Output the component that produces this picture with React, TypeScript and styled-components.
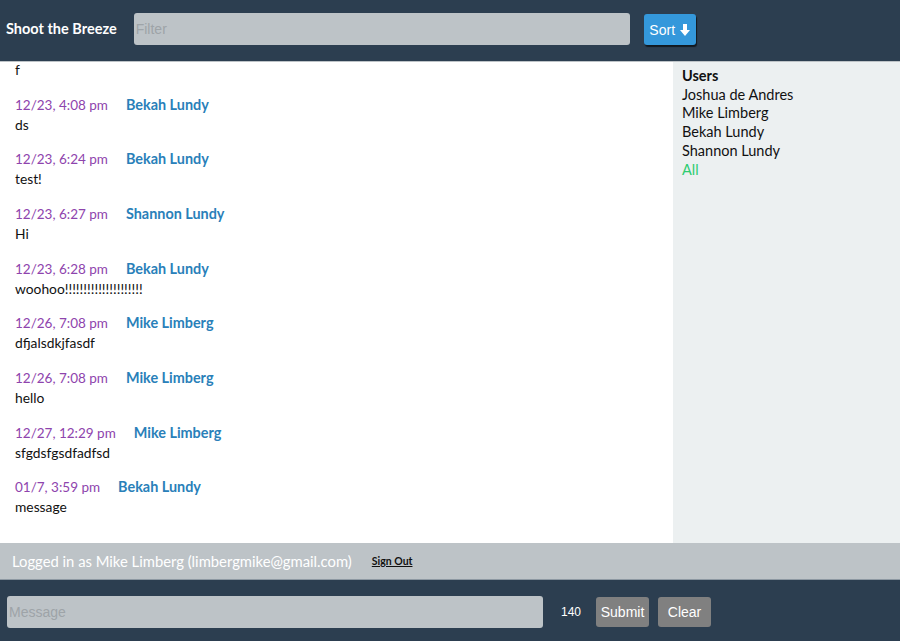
import styled, { createGlobalStyle } from 'styled-components'

const GlobalStyle = createGlobalStyle`
  html, body, #root {
    margin: 0;
    height: 100%;
  }
  body {
    font-family: 'Lato', 'Open Sans', sans-serif;
    overflow: hidden;
  }
  * {
    box-sizing: border-box;
  }
`

const Page = styled.div`
  display: flex;
  flex-direction: column;
  height: 641px;
  width: 900px;
`

const Header = styled.header`
  height: 62px;
  background-color: #2c3e50;
  border-bottom: 1px solid #bdc3c7;
  display: flex;
  align-items: flex-start;
  padding: 13px 6px 0;
`
const Title = styled.h1`
  margin: 0 17px 0 0;
  line-height: 32px;
  color: #fff;
  font-size: 14.5px;
  font-weight: 700;
  white-space: nowrap;
`
const Field = styled.input<{ $width: number }>`
  width: ${p => p.$width}px;
  height: 32px;
  border: none;
  border-radius: 3px;
  background-color: #bdc3c7;
  font-family: 'Liberation Sans', Arial, sans-serif;
  font-size: 14px;
  padding: 0 2px;
  outline: none;
  &::placeholder {
    color: #9ea4a8;
  }
`
const SortButton = styled.button`
  margin-left: 14px;
  margin-top: 1px;
  width: 52px;
  height: 31px;
  border: none;
  border-radius: 3px;
  background-color: #3498db;
  color: #fff;
  font-family: 'Liberation Sans', Arial, sans-serif;
  font-size: 14px;
  box-shadow: 1px 2px 1px rgba(0, 0, 0, 0.6);
  display: flex;
  align-items: center;
  justify-content: center;
  gap: 5px;
  padding: 0;
`

const Main = styled.main`
  flex: 1;
  display: flex;
  min-height: 0;
`
const Messages = styled.section`
  flex: 1;
  display: flex;
  flex-direction: column;
  justify-content: flex-end;
  overflow: hidden;
  background: #fff;
  padding: 0 15px 11px;
`
const Message = styled.article`
  margin-bottom: 14.7px;
  line-height: 20px;
`
const Meta = styled.div`
  display: flex;
  align-items: baseline;
  gap: 18px;
`
const Time = styled.span`
  color: #8e44ad;
  font-size: 13.5px;
`
const Author = styled.span`
  color: #2980b9;
  font-size: 14.4px;
  font-weight: 700;
`
const Body = styled.div`
  color: #111;
  font-size: 13.8px;
`

const Sidebar = styled.aside`
  width: 227px;
  background-color: #ecf0f1;
  padding: 5px 9px;
  font-size: 14.5px;
  line-height: 18.7px;
  color: #111;
`
const SideTitle = styled.div`
  font-weight: 700;
`
const UserItem = styled.div<{ $active?: boolean }>`
  color: ${p => (p.$active ? '#2ecc71' : '#111')};
`

const Status = styled.div`
  height: 37px;
  background-color: #bdc3c7;
  border-bottom: 1px solid #8d98a2;
  display: flex;
  align-items: center;
  padding: 0 12px;
  color: #fff;
  font-size: 14.8px;
`
const SignOut = styled.a`
  margin-left: 20px;
  color: #111;
  font-size: 10.5px;
  font-weight: 700;
  text-decoration: underline;
`

const Composer = styled.footer`
  flex: 0 0 61px;
  background-color: #2c3e50;
  display: flex;
  align-items: center;
  padding: 2px 7px 0;
`
const Counter = styled.span`
  color: #fff;
  font-family: 'Liberation Sans', Arial, sans-serif;
  font-size: 12px;
  margin: 0 15px 0 18px;
`
const GrayButton = styled.button`
  height: 30px;
  width: 53px;
  margin-right: 9px;
  border: none;
  border-radius: 3px;
  background-color: #808080;
  color: #fff;
  font-family: 'Liberation Sans', Arial, sans-serif;
  font-size: 14px;
  padding: 0;
`

type Msg = { time?: string; author?: string; text: string }

// list is scrolled to the bottom; the first entry only shows its text
const messages: Msg[] = [
  { text: 'f' },
  { time: '12/23, 4:08 pm', author: 'Bekah Lundy', text: 'ds' },
  { time: '12/23, 6:24 pm', author: 'Bekah Lundy', text: 'test!' },
  { time: '12/23, 6:27 pm', author: 'Shannon Lundy', text: 'Hi' },
  { time: '12/23, 6:28 pm', author: 'Bekah Lundy', text: 'woohoo!!!!!!!!!!!!!!!!!!!!!' },
  { time: '12/26, 7:08 pm', author: 'Mike Limberg', text: 'dfjalsdkjfasdf' },
  { time: '12/26, 7:08 pm', author: 'Mike Limberg', text: 'hello' },
  { time: '12/27, 12:29 pm', author: 'Mike Limberg', text: 'sfgdsfgsdfadfsd' },
  { time: '01/7, 3:59 pm', author: 'Bekah Lundy', text: 'message' },
]

const users = ['Joshua de Andres', 'Mike Limberg', 'Bekah Lundy', 'Shannon Lundy']

function ArrowDown() {
  return (
    <svg width="10" height="12" viewBox="0 0 10 12">
      <path d="M3 0h4v6h3L5 12 0 6h3z" fill="#fff" />
    </svg>
  )
}

export default function App() {
  return (
    <Page>
      <GlobalStyle />
      <Header>
        <Title>Shoot the Breeze</Title>
        <Field $width={496} placeholder="Filter" />
        <SortButton>
          Sort <ArrowDown />
        </SortButton>
      </Header>
      <Main>
        <Messages>
          {messages.map((m, i) => (
            <Message key={i}>
              {m.time && (
                <Meta>
                  <Time>{m.time}</Time>
                  <Author>{m.author}</Author>
                </Meta>
              )}
              <Body>{m.text}</Body>
            </Message>
          ))}
        </Messages>
        <Sidebar>
          <SideTitle>Users</SideTitle>
          {users.map(u => (
            <UserItem key={u}>{u}</UserItem>
          ))}
          <UserItem $active>All</UserItem>
        </Sidebar>
      </Main>
      <Status>
        Logged in as Mike Limberg (limbergmike@gmail.com)
        <SignOut href="#">Sign Out</SignOut>
      </Status>
      <Composer>
        <Field $width={536} placeholder="Message" />
        <Counter>140</Counter>
        <GrayButton>Submit</GrayButton>
        <GrayButton>Clear</GrayButton>
      </Composer>
    </Page>
  )
}
